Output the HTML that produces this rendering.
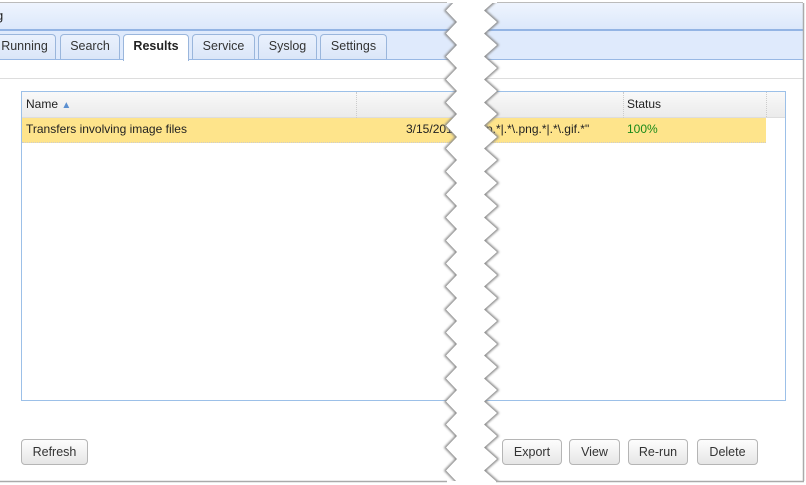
<!DOCTYPE html>
<html><head><style>
body{margin:0;width:806px;height:485px;background:#fff;font-family:"Liberation Sans",Arial,sans-serif;font-size:12px;color:#222;position:relative;overflow:hidden}
.a{position:absolute}
.hdr{left:0;top:3px;width:803px;height:26px;background:linear-gradient(#eef4fe,#dce8fb);border-bottom:2px solid #93b4e4}
.tabbar{left:0;top:31px;width:803px;height:28px;background:#dfeafc;border-bottom:1px solid #98b8e4}
.tab{top:34px;height:24px;border:1px solid #9ab6dc;border-bottom:none;border-radius:4px 4px 0 0;background:linear-gradient(#eaf1fd,#dbe6f8);text-align:center;line-height:23px;font-size:12.5px;color:#333}
.tab.sel{background:#fff;height:26px;font-weight:bold;color:#222}
.line{left:0;top:78px;width:803px;height:1px;background:#ddd}
.grid{left:21px;top:91px;width:763px;height:308px;border:1px solid #9cc0e8;background:#fff}
.gh{left:0;top:0;width:763px;height:25px;background:linear-gradient(#f9f9f9,#ebebeb);border-bottom:1px solid #ddd}
.row{left:0;top:26px;width:744px;height:24px;background:#fee48b;border-bottom:1px dotted #ccc}
.btn{top:439px;height:24px;border:1px solid #b5b5b5;border-radius:4px;background:linear-gradient(#fdfdfd,#e6e6e6);text-align:center;line-height:24px;font-size:12.5px;color:#333}
</style></head><body>
<div class="a hdr"><span class="a" style="left:-4px;top:5px;font-size:13px">g</span></div>
<div class="a tabbar"></div>
<div class="a tab" style="left:-7px;width:61px">Running</div>
<div class="a tab" style="left:60px;width:58px">Search</div>
<div class="a tab sel" style="left:123px;width:64px">Results</div>
<div class="a tab" style="left:192px;width:61px">Service</div>
<div class="a tab" style="left:258px;width:57px">Syslog</div>
<div class="a tab" style="left:320px;width:65px">Settings</div>
<div class="a line"></div>
<div class="a grid">
 <div class="a gh"></div>
 <div class="a" style="left:334px;top:0;height:50px;border-left:1px dotted #ccc"></div>
 <div class="a" style="left:601px;top:0;height:50px;border-left:1px dotted #ccc"></div>
 <div class="a" style="left:744px;top:0;height:25px;border-left:1px dotted #ccc"></div>
 <div class="a row"></div>
 <div class="a" style="left:4px;top:5px">Name <span style="color:#5b8fd0;font-size:10px">&#9650;</span></div>
 <div class="a" style="left:605px;top:5px">Status</div>
 <div class="a" style="left:4px;top:30px">Transfers involving image files</div>
 <div class="a" style="left:384px;top:30px">3/15/2017</div>
 <div class="a" style="left:464px;top:30px">p.*|.*\.png.*|.*\.gif.*"</div>
 <div class="a" style="left:605px;top:30px;color:#1a8a1a">100%</div>
</div>
<div class="a btn" style="left:21px;width:65px">Refresh</div>
<div class="a btn" style="left:502px;width:58px">Export</div>
<div class="a btn" style="left:569px;width:49px">View</div>
<div class="a btn" style="left:628px;width:58px">Re-run</div>
<div class="a btn" style="left:697px;width:59px">Delete</div>
<svg class="a" style="left:0;top:0" width="806" height="485">
<defs><filter id="f" x="-20%" y="-20%" width="140%" height="140%"><feGaussianBlur stdDeviation="1"/></filter></defs>
<g id="zz">
<path fill="none" stroke="#888" stroke-width="3" filter="url(#f)" d="M457,-1 L446,10.5 L457,22 L446,33.5 L457,45 L446,56.5 L457,68 L446,79.5 L457,91 L446,102.5 L457,114 L446,125.5 L457,137 L446,148.5 L457,160 L446,171.5 L457,183 L446,194.5 L457,206 L446,217.5 L457,229 L446,240.5 L457,252 L446,263.5 L457,275 L446,286.5 L457,298 L446,309.5 L457,321 L446,332.5 L457,344 L446,355.5 L457,367 L446,378.5 L457,390 L446,401.5 L457,413 L446,424.5 L457,436 L446,447.5 L457,459 L446,470.5 L457,482 L446,493 M484,493 L497,482 L484,470.5 L497,459 L484,447.5 L497,436 L484,424.5 L497,413 L484,401.5 L497,390 L484,378.5 L497,367 L484,355.5 L497,344 L484,332.5 L497,321 L484,309.5 L497,298 L484,286.5 L497,275 L484,263.5 L497,252 L484,240.5 L497,229 L484,217.5 L497,206 L484,194.5 L497,183 L484,171.5 L497,160 L484,148.5 L497,137 L484,125.5 L497,114 L484,102.5 L497,91 L484,79.5 L497,68 L484,56.5 L497,45 L484,33.5 L497,22 L484,10.5 L497,-1"/>
</g>
<path fill="#fff" d="M457,-1 L446,10.5 L457,22 L446,33.5 L457,45 L446,56.5 L457,68 L446,79.5 L457,91 L446,102.5 L457,114 L446,125.5 L457,137 L446,148.5 L457,160 L446,171.5 L457,183 L446,194.5 L457,206 L446,217.5 L457,229 L446,240.5 L457,252 L446,263.5 L457,275 L446,286.5 L457,298 L446,309.5 L457,321 L446,332.5 L457,344 L446,355.5 L457,367 L446,378.5 L457,390 L446,401.5 L457,413 L446,424.5 L457,436 L446,447.5 L457,459 L446,470.5 L457,482 L446,493 L484,493 L497,482 L484,470.5 L497,459 L484,447.5 L497,436 L484,424.5 L497,413 L484,401.5 L497,390 L484,378.5 L497,367 L484,355.5 L497,344 L484,332.5 L497,321 L484,309.5 L497,298 L484,286.5 L497,275 L484,263.5 L497,252 L484,240.5 L497,229 L484,217.5 L497,206 L484,194.5 L497,183 L484,171.5 L497,160 L484,148.5 L497,137 L484,125.5 L497,114 L484,102.5 L497,91 L484,79.5 L497,68 L484,56.5 L497,45 L484,33.5 L497,22 L484,10.5 L497,-1 Z"/>
<rect x="0" y="0" width="806" height="3" fill="#fff"/>
<line x1="0" y1="2.5" x2="447" y2="2.5" stroke="#bbb"/>
<line x1="497" y1="2.5" x2="803" y2="2.5" stroke="#bbb"/>
<rect x="803" y="0" width="3" height="485" fill="#fff"/>
<line x1="803.5" y1="3" x2="803.5" y2="481" stroke="#aaa" stroke-width="1.5"/>
<rect x="0" y="481" width="806" height="4" fill="#fff"/>
<line x1="0" y1="481.5" x2="447" y2="481.5" stroke="#aaa" stroke-width="1.5"/>
<line x1="496" y1="481.5" x2="804" y2="481.5" stroke="#aaa" stroke-width="1.5"/>
</svg>
</body></html>
